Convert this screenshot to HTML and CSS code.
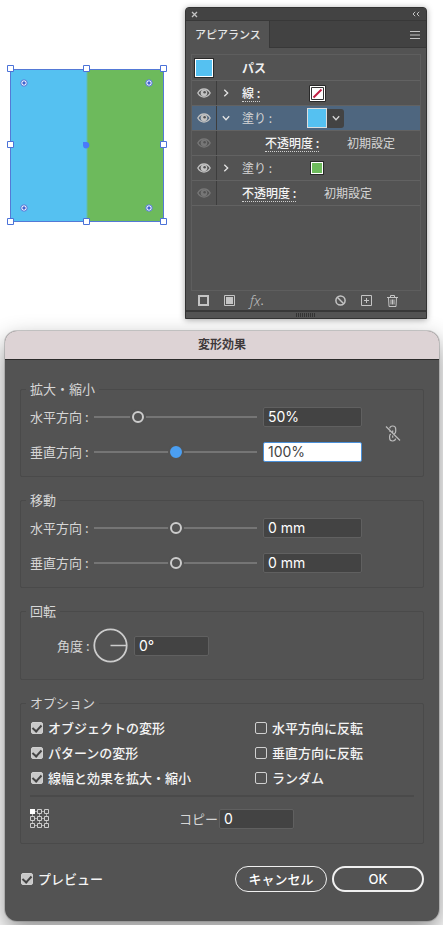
FILE: index.html
```html
<!DOCTYPE html>
<html lang="ja">
<head>
<meta charset="utf-8">
<meta name="viewport" content="width=device-width, initial-scale=1">
<title>変形効果</title>
<link rel="stylesheet" href="styles.css">
</head>
<body>
<svg class="symbols" aria-hidden="true">
  <symbol id="eye" viewBox="0 0 14 10">
    <path d="M.8 5C2.300 2.300 4.400 1 7 1s4.700 1.300 6.200 4C11.700 7.700 9.600 9 7 9S2.300 7.700.8 5z" fill="none" stroke="currentColor" stroke-width="1.300"/>
    <circle cx="7" cy="5" r="3.300" fill="currentColor"/>
    <circle cx="7.600" cy="4.300" r="1.300" fill="#535353"/>
  </symbol>
  <symbol id="chevron" viewBox="0 0 8 8">
    <path d="M2.300.8 5.700 4 2.300 7.200" fill="none" stroke="currentColor" stroke-width="1.300"/>
  </symbol>
  <symbol id="chevron-down" viewBox="0 0 8 8">
    <path d="M.8 2.300 4 5.700 7.200 2.300" fill="none" stroke="currentColor" stroke-width="1.300"/>
  </symbol>
</svg>

<div class="workspace">
  <svg class="artboard" viewBox="5 64 163 163" role="img" aria-label="パス">
    <rect x="10" y="69" width="77" height="153" fill="#55c1f1"/>
    <rect x="87" y="69" width="77" height="153" fill="#6dba5c"/>
    <path d="M87 69v153" stroke="#63bcab"/>
    <rect x="10.500" y="69.500" width="153" height="152" fill="none" stroke="#5479d6"/>
    <g fill="#fff" stroke="#4b72d8">
      <path d="M7.500 65.500h6v6h-6zM83.500 65.500h6v6h-6zM160.500 65.500h6v6h-6zM7.500 141.500h6v6h-6zM160.500 141.500h6v6h-6zM7.500 218.500h6v6h-6zM83.500 218.500h6v6h-6zM160.500 218.500h6v6h-6z"/>
      <circle cx="24" cy="83" r="3.200"/><circle cx="149" cy="83" r="3.200"/>
      <circle cx="24" cy="208" r="3.200"/><circle cx="149" cy="208" r="3.200"/>
    </g>
    <g fill="#3f62d0">
      <circle cx="24" cy="83" r="1.700"/><circle cx="149" cy="83" r="1.700"/>
      <circle cx="24" cy="208" r="1.700"/><circle cx="149" cy="208" r="1.700"/>
    </g>
    <path d="M83 142h3.500a3.200 3.200 0 1 1-3.500 3.500z" fill="#4a79fb"/>
  </svg>

  <section class="panel" aria-label="アピアランス">
    <div class="panel-top">
      <button class="icon-button" aria-label="閉じる"><svg width="7" height="7" viewBox="0 0 7 7"><path d="M1 1l5 5M6 1 1 6" stroke="currentColor" stroke-width="1.300"/></svg></button>
      <button class="icon-button" aria-label="折りたたむ"><svg width="8" height="6" viewBox="0 0 8 6"><path d="M3.200.8 1 3l2.200 2.200M7.200.8 5 3l2.200 2.200" fill="none" stroke="currentColor"/></svg></button>
    </div>
    <div class="tabs">
      <button class="tab">アピアランス</button>
      <button class="icon-button" aria-label="メニュー"><svg width="10" height="8" viewBox="0 0 10 8"><path d="M0 .5h10M0 4h10M0 7.500h10" stroke="currentColor"/></svg></button>
    </div>
    <ul class="layers">
      <li class="path-row"><span class="swatch swatch-path blue"></span><strong>パス</strong></li>
      <li class="layer">
        <button class="eye" aria-label="線の表示"><svg><use href="#eye"/></svg></button>
        <button class="expand" aria-label="展開"><svg><use href="#chevron"/></svg></button>
        <span class="name"><a href="#stroke">線 :</a></span>
        <span class="slot"><svg class="none" viewBox="0 0 17 17"><path d="M.5.5h16v16H.5z" fill="#fff" stroke="#292929"/><path d="M2.500 2.500h12v12h-12z" fill="#fff" stroke="#333"/><path d="M4.500 12.500l8-8" stroke="#c21c42" stroke-width="2"/></svg></span>
      </li>
      <li class="layer selected">
        <button class="eye" aria-label="塗りの表示"><svg><use href="#eye"/></svg></button>
        <button class="expand" aria-label="折りたたむ"><svg><use href="#chevron-down"/></svg></button>
        <span class="name">塗り :</span>
        <span class="slot"><span class="swatch swatch-large blue"></span></span>
        <button class="picker" aria-label="塗りの色"><svg><use href="#chevron-down"/></svg></button>
      </li>
      <li class="layer nested">
        <button class="eye dim" aria-label="不透明度の表示"><svg><use href="#eye"/></svg></button>
        <span class="opacity"><a href="#fill-opacity">不透明度 :</a></span>
        <span>初期設定</span>
      </li>
      <li class="layer">
        <button class="eye" aria-label="塗りの表示"><svg><use href="#eye"/></svg></button>
        <button class="expand" aria-label="展開"><svg><use href="#chevron"/></svg></button>
        <span class="name">塗り :</span>
        <span class="slot"><span class="swatch green"></span></span>
      </li>
      <li class="layer overall">
        <button class="eye dim" aria-label="不透明度の表示"><svg><use href="#eye"/></svg></button>
        <span class="opacity"><a href="#opacity">不透明度 :</a></span>
        <span>初期設定</span>
      </li>
    </ul>
    <div class="tools">
      <button class="icon-button" aria-label="新規線を追加"><svg width="11" height="11" viewBox="0 0 11 11"><path d="M1 1h9v9H1z" fill="none" stroke="currentColor" stroke-width="2"/></svg></button>
      <button class="icon-button" aria-label="新規塗りを追加"><svg width="11" height="11" viewBox="0 0 11 11"><path d="M.5.5h10v10H.5z" fill="none" stroke="currentColor"/><path d="M2 2h7v7H2z" fill="currentColor"/></svg></button>
      <button class="icon-button fx" aria-label="新規効果を追加">fx<span>.</span></button>
      <span class="spacer"></span>
      <button class="icon-button" aria-label="アピアランスを消去"><svg width="11" height="11" viewBox="0 0 11 11"><circle cx="5.500" cy="5.500" r="4.600" fill="none" stroke="currentColor" stroke-width="1.500"/><path d="M2.300 2.300l6.400 6.400" stroke="currentColor" stroke-width="1.500"/></svg></button>
      <button class="icon-button" aria-label="項目を複製"><svg width="11" height="11" viewBox="0 0 11 11"><path d="M.5.500h10v10H.5zM5.500 3v5M3 5.500h5" fill="none" stroke="currentColor"/></svg></button>
      <button class="icon-button" aria-label="項目を削除"><svg width="11" height="12" viewBox="0 0 11 12"><path d="M0 2.500h11M3.500 2.500v-2h4v2M1.500 2.500l.5 9h7l.5-9M4 4.500v5M5.500 4.500v5M7 4.500v5" fill="none" stroke="currentColor"/></svg></button>
    </div>
    <div class="resize"><span class="grip"></span></div>
  </section>
</div>

<form class="dialog" aria-labelledby="dialog-title">
  <h1 id="dialog-title">変形効果</h1>
  <div class="dialog-body">
    <fieldset>
      <legend>拡大・縮小</legend>
      <div class="pair">
        <div class="rows">
          <div class="row"><label for="scale-h">水平方向 :</label><input type="range" min="0" max="200" value="50" aria-label="水平方向のスライダー"><input type="text" id="scale-h" value="50%"></div>
          <div class="row"><label for="scale-v">垂直方向 :</label><input class="active" type="range" min="0" max="200" value="100" aria-label="垂直方向のスライダー"><input class="editing" type="text" id="scale-v" value="100%"></div>
        </div>
        <button type="button" class="link" aria-label="縦横比を固定"><svg width="16" height="18" viewBox="0 0 16 18"><path d="M4.600 3.400A3 3 0 0 1 7.500 1h.2a3 3 0 0 1 3 3v2.500a2.500 2.500 0 0 1-1.500 2.300M4.600 6.500V7M7.700 5.500v2M7.700 10.500v2.300M4.600 11.200V13a3 3 0 0 0 3 3h.2a3 3 0 0 0 2.900-2.300M4.600 11.200a2.500 2.500 0 0 1 1.300-2.200M1 1.500l14 14" fill="none" stroke="currentColor" stroke-width="1.200"/></svg></button>
      </div>
    </fieldset>
    <fieldset>
      <legend>移動</legend>
      <div class="pair">
        <div class="rows">
          <div class="row"><label for="move-h">水平方向 :</label><input type="range" min="-100" max="100" value="0" aria-label="水平方向のスライダー"><input type="text" id="move-h" value="0 mm"></div>
          <div class="row"><label for="move-v">垂直方向 :</label><input type="range" min="-100" max="100" value="0" aria-label="垂直方向のスライダー"><input type="text" id="move-v" value="0 mm"></div>
        </div>
      </div>
    </fieldset>
    <fieldset class="rotate">
      <legend>回転</legend>
      <div class="angle">
        <label for="angle">角度 :</label>
        <svg width="35" height="35" viewBox="0 0 35 35" aria-hidden="true"><circle cx="17.500" cy="17.500" r="16.200" fill="none" stroke="#ccc" stroke-width="1.800"/><path d="M17.500 17.500H33" stroke="#ccc" stroke-width="1.500"/></svg>
        <input class="short" type="text" id="angle" value="0°">
      </div>
    </fieldset>
    <fieldset class="options">
      <legend>オプション</legend>
      <div class="checks">
        <label><input type="checkbox" checked>オブジェクトの変形</label>
        <label><input type="checkbox">水平方向に反転</label>
        <label><input type="checkbox" checked>パターンの変形</label>
        <label><input type="checkbox">垂直方向に反転</label>
        <label><input type="checkbox" checked>線幅と効果を拡大・縮小</label>
        <label><input type="checkbox">ランダム</label>
      </div>
      <hr>
      <div class="copies">
        <button type="button" class="icon-button" aria-label="基準点"><svg width="19" height="19" viewBox="0 0 19 19"><path d="M5 2.500h2M12 2.500h2M5 9.500h2M12 9.500h2M5 16.500h2M12 16.500h2M2.500 5v2M2.500 12v2M9.500 5v2M9.500 12v2M16.500 5v2M16.500 12v2" stroke="#aaa"/><path d="M.5.5h4v4h-4zM7.500.5h4v4h-4zM14.500.5h4v4h-4zM.5 7.500h4v4h-4zM7.500 7.500h4v4h-4zM14.500 7.500h4v4h-4zM.5 14.500h4v4h-4zM7.500 14.500h4v4h-4zM14.500 14.500h4v4h-4z" fill="none" stroke="#ccc"/><path d="M0 0h5v5H0z" fill="#fff"/></svg></button>
        <label for="copies">コピー</label>
        <input class="short" type="text" id="copies" value="0">
      </div>
    </fieldset>
    <div class="actions">
      <label><input type="checkbox" checked>プレビュー</label>
      <button type="button">キャンセル</button>
      <button type="submit" class="primary">OK</button>
    </div>
  </div>
</form>
</body>
</html>
```
FILE: styles.css
```css
* { box-sizing: border-box; }

body {
  margin: 0;
  padding: 7px 4px 4px 5px;
  background: #fff;
  color: #d6d6d6;
  font-family: "Noto Sans CJK JP", sans-serif;
  font-size: 13px;
  line-height: 18px;
}

button {
  padding: 0;
  border: 0;
  background: none;
  color: inherit;
  font: inherit;
}

svg { display: block; }
.symbols { position: absolute; width: 0; height: 0; }

.workspace {
  display: flex;
  justify-content: space-between;
  align-items: flex-start;
  padding-right: 12px;
}

.artboard { width: 163px; height: 163px; margin-top: 57px; }

/* Appearance panel */
.panel {
  width: 242px;
  border: 1px solid #333;
  border-radius: 4px 4px 0 0;
  background: #535353;
  box-shadow: 0 1px 6px rgba(0, 0, 0, .35);
  font-size: 12px;
}

.icon-button { display: flex; align-items: center; justify-content: center; color: #c4c4c4; }

.panel-top {
  display: flex;
  justify-content: space-between;
  height: 13px;
  padding: 0 6px 0 5px;
  border-bottom: 1px solid #383838;
  border-radius: 3px 3px 0 0;
  background: #434343;
}

.tabs {
  display: flex;
  justify-content: space-between;
  height: 27px;
  padding-right: 6px;
  background: linear-gradient(#424242 26px, #383838 26px);
}

.tab {
  padding: 0 8px 2px 9px;
  border-right: 1px solid #383838;
  background: #535353;
  color: #e6e6e6;
  font-size: 11px;
  font-weight: 500;
}

.layers {
  min-height: 237px;
  margin: 6px 5px 0 5px;
  padding: 0;
  border: 1px solid #5e5e5e;
  list-style: none;
}

.path-row, .layer {
  display: flex;
  align-items: center;
  height: 25px;
  border-bottom: 1px solid #626262;
}

.path-row { height: 26px; padding-left: 2px; gap: 28px; color: #f0f0f0; }

.swatch { width: 14px; height: 14px; border: 1px solid #292929; outline: 1px solid #fff; outline-offset: -2px; }
.swatch-path { width: 20px; height: 20px; }
.swatch-large { width: 20px; height: 20px; border-color: #ddd; outline: 0; }
.blue { background: #55c1f1; }
.green { background: #6dba5c; }
.none { width: 17px; height: 17px; }

.selected { background: #4e667f; }

.eye {
  display: flex;
  align-items: center;
  justify-content: center;
  width: 25px;
  height: 24px;
  border-right: 1px solid #3d3d3d;
  color: #c2c2c2;
}
.eye svg { width: 14px; height: 10px; }
.dim { color: #777; }

.expand { width: 25px; padding-left: 5px; color: #e4e4e4; }
.expand svg, .picker svg { width: 8px; height: 8px; }
.name { width: 65px; }
.slot { display: flex; justify-content: center; width: 20px; }
.picker {
  display: flex;
  align-items: center;
  justify-content: center;
  width: 17px;
  height: 19px;
  border-radius: 0 3px 3px 0;
  background: #434343;
}

.layer a {
  display: inline-block;
  border-bottom: 1px dotted #d0d0d0;
  color: #f4f4f4;
  font-weight: 500;
  line-height: 17px;
  text-decoration: none;
}
.opacity { width: 82px; }
.overall .opacity { margin-left: 25px; }
.nested .opacity { margin-left: 48px; }

.tools { display: flex; align-items: center; gap: 15px; height: 19px; padding: 0 28px 0 12px; }
.spacer { flex: 1; }
.fx { font-family: "Open Sans", sans-serif; font-size: 14px; font-style: italic; font-weight: 300; }
.fx span { font-size: 12px; font-style: normal; font-weight: 400; }

.resize { display: flex; justify-content: center; height: 8px; border-top: 2px solid #383838; }
.grip {
  width: 20px;
  height: 4px;
  margin-top: 1px;
  background: repeating-linear-gradient(90deg, #333 0 1px, transparent 1px 2px);
}

/* Transform dialog */
.dialog {
  margin-top: 12px;
  border-radius: 12px;
  background: #535353;
  box-shadow: 0 0 0 1px rgba(130, 130, 130, .4), 0 10px 24px rgba(0, 0, 0, .45);
}

h1 {
  height: 29px;
  margin: 0;
  border-bottom: 1px solid #2b2b2b;
  border-radius: 12px 12px 0 0;
  background: #ddd3d5;
  color: #3f393b;
  font-size: 12px;
  font-weight: 700;
  line-height: 26px;
  text-align: center;
}

.dialog-body { padding: 20px 15px 29px; }

fieldset {
  min-width: 0;
  margin: 0 0 14px;
  padding: 1px 9px 7px;
  border: 1px solid #4a4a4a;
  border-radius: 2px;
}

legend { margin-left: -4px; padding: 0 4px; line-height: 18px; }

.pair { display: grid; grid-template-columns: 1fr 52px; }
.row { display: flex; align-items: center; height: 35px; }
.row label { width: 64px; }
.row input[type="range"] { flex: 1; }

input { margin: 0; }

input[type="text"] {
  width: 99px;
  height: 20px;
  margin-left: 6px;
  padding: 0 4px;
  border: 1px solid #606060;
  border-radius: 2px;
  background: #434343;
  color: #fff;
  font-family: Inter, "Liberation Sans", sans-serif;
  font-size: 14px;
}
input[type="text"].short { width: 75px; }
input[type="text"].editing { border-color: #4a90d9; background: #fff; color: #444; }

input[type="range"] { min-width: 0; height: 16px; appearance: none; background: none; }
input[type="range"]::-webkit-slider-runnable-track {
  height: 16px;
  background: linear-gradient(transparent 7px, #757575 7px 9px, transparent 9px);
}
input[type="range"]::-webkit-slider-thumb {
  width: 12px;
  height: 12px;
  margin-top: 2px;
  appearance: none;
  border: 2px solid #ccc;
  border-radius: 50%;
  background: #535353;
  box-shadow: 0 0 0 2px #535353;
}
input[type="range"].active::-webkit-slider-thumb { border-color: #4b9ff2; background: #4b9ff2; }

.link { display: flex; align-items: center; justify-content: center; padding-left: 10px; color: #bbb; }

.rotate { padding: 8px 9px 16px; }
.angle { display: flex; align-items: center; }
.angle label { width: 63px; padding-left: 27px; }

.options { margin-bottom: 22px; padding-top: 3px; }
.checks { display: grid; grid-template-columns: 7fr 5fr; grid-auto-rows: 25px; align-items: center; }
.checks label, .actions label { display: flex; align-items: center; gap: 5px; color: #f4f4f4; font-weight: 500; }

input[type="checkbox"] {
  width: 12px;
  height: 12px;
  margin-left: 1px;
  appearance: none;
  border: 1px solid #d0d0d0;
  border-radius: 2px;
}
input[type="checkbox"]:checked { background: #c8c8c8; }
input[type="checkbox"]:checked::after {
  content: "";
  display: block;
  width: 4px;
  height: 7px;
  margin: 0 auto;
  border: solid #444;
  border-width: 0 2px 2px 0;
  transform: rotate(42deg);
}

hr { height: 2px; margin: 5px 0 4px; border: 0; background: #4a4a4a; }

.copies { display: flex; align-items: center; height: 35px; }
.copies label { width: 40px; margin-left: 130px; }
.copies input[type="text"] { margin-left: 0; }

.actions { display: flex; align-items: center; gap: 5px; }
.actions label { margin-right: auto; }
.actions button {
  width: 92px;
  height: 26px;
  border: 1px solid #f0f0f0;
  border-radius: 13px;
  color: #fff;
  font-weight: 500;
  line-height: 22px;
}
.actions .primary { border-width: 2px; font-family: Inter, "Liberation Sans", sans-serif; }
```
